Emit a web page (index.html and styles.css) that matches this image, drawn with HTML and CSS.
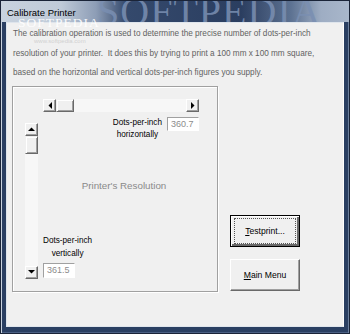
FILE: index.html
```html
<!DOCTYPE html>
<html lang="en">
<head>
    <meta charset="UTF-8">
    <title>Calibrate Printer</title>
    <link rel="stylesheet" href="styles.css">
</head>
<body>
    <div class="window">
        <div class="titlebar">
            <span class="title">Calibrate Printer</span>
            <span class="wm-big">SOFTPEDIA</span>
        </div>
        <div class="client">
            <span class="wm-small">SOFTPEDIA</span>
            <span class="wm-url">www.softpedia.com</span>
            <p class="intro">The calibration operation is used to determine the precise number of dots-per-inch<br>resolution of your printer.&nbsp; It does this by trying to print a 100 mm x 100 mm square,<br>based on the horizontal and vertical dots-per-inch figures you supply.</p>
            <div class="content">
                <div class="panel">
                    <div class="hscroll">
                        <div class="sb-btn"><svg width="4" height="7" viewBox="0 0 4 7"><path d="M4 0V7L0.5 3.5Z" fill="#000"/></svg></div>
                        <div class="sb-thumb"></div>
                        <div class="sb-track"></div>
                        <div class="sb-btn"><svg width="4" height="7" viewBox="0 0 4 7"><path d="M0 0V7L3.5 3.5Z" fill="#000"/></svg></div>
                    </div>
                    <div class="panel-body">
                        <div class="vscroll">
                            <div class="sb-btn"><svg width="7" height="4" viewBox="0 0 7 4"><path d="M0 4H7L3.5 0.5Z" fill="#000"/></svg></div>
                            <div class="sb-thumb"></div>
                            <div class="sb-track"></div>
                            <div class="sb-btn"><svg width="7" height="4" viewBox="0 0 7 4"><path d="M0 0H7L3.5 3.5Z" fill="#000"/></svg></div>
                        </div>
                        <div class="fields">
                            <div class="hrow">
                                <div class="lbl">Dots-per-inch<br>horizontally</div>
                                <div class="field">360.7</div>
                            </div>
                            <div class="caption">Printer's Resolution</div>
                            <div class="vrow">
                                <div class="lbl">Dots-per-inch<br>vertically</div>
                                <div class="field">361.5</div>
                            </div>
                        </div>
                    </div>
                </div>
                <div class="buttons">
                    <button class="btn default"><span class="focus"><u>T</u>estprint...</span></button>
                    <button class="btn"><u>M</u>ain Menu</button>
                </div>
            </div>
        </div>
    </div>
</body>
</html>
```

FILE: styles.css
```css
html, body { margin: 0; }
body { font-family: "Liberation Sans", Arial, sans-serif; font-size: 8.2px; }

.window {
    width: 350px; height: 334px; box-sizing: border-box;
    display: flex; flex-direction: column;
    background: #2a3f62;
    border: 1px solid #1a2438;
    box-shadow: inset 1px 0 #c9d3df, inset -1px 0 #6c7f9c, inset 0 -1px #4a5f82;
    overflow: hidden;
}

.titlebar {
    height: 21px; position: relative; overflow: hidden; flex: none;
    background: linear-gradient(90deg, #c8d2de 0, #bfcad8 60px, #8d9db6 95px, #34496c 125px, #2b3e60 240px, #5d7292 290px, #9eadc3 320px, #a9b7cb 349px);
}
.title {
    position: relative; z-index: 1;
    display: block; padding: 6px 0 0 6px;
    font-family: "Liberation Sans", Arial, sans-serif; font-size: 9.5px; color: #000;
}
.wm-big {
    position: absolute; left: 96px; top: -13px;
    font-family: "Liberation Serif", serif; font-size: 40px; letter-spacing: 1px;
    color: #7a8fb2; opacity: 0.85;
}

.client {
    flex: 1; position: relative;
    margin: 0 5px 6px;
    background: #f0f0f0;
    border: 1px solid #dfe5ec;
    border-right-color: #fff;
    padding: 0 0 0 5px;
}
.wm-small {
    position: absolute; left: 11px; top: -8px;
    font-family: "Liberation Serif", serif; font-size: 13.5px; letter-spacing: 1px;
    color: #fff; opacity: 0.9;
}
.wm-url {
    position: absolute; left: 27px; top: 15px;
    font-size: 6px; color: #d0d0d0;
}

.intro {
    margin: 1px 0 0 1px; white-space: nowrap;
    line-height: 19.5px; color: #626262; font-size: 8.2px;
}

.content { display: flex; margin-top: 3px; }

.panel {
    width: 206px; height: 206px; box-sizing: border-box;
    border: 1px solid #a0a0a0;
    box-shadow: inset 1px 1px #fff, 1px 1px #fff;
    padding: 12px 0 0 0;
}

.hscroll { display: flex; height: 13px; width: 156px; margin-left: 30px; }
.vscroll { display: flex; flex-direction: column; width: 13px; height: 156px; margin: 6px 0 0 12px; }

.sb-btn {
    width: 13px; height: 13px; box-sizing: border-box; flex: none;
    display: flex; align-items: center; justify-content: center;
    background: #f0f0f0;
    border: 1px solid; border-color: #fff #696969 #696969 #fff;
    box-shadow: inset -1px -1px #a0a0a0;
}
.hscroll .sb-thumb { width: 18px; height: 13px; }
.vscroll .sb-thumb { width: 13px; height: 18px; }
.sb-thumb {
    box-sizing: border-box; flex: none;
    background: #f0f0f0;
    border: 1px solid; border-color: #f0f0f0 #696969 #696969 #f0f0f0;
    box-shadow: inset 1px 1px #fff, inset -1px -1px #a0a0a0;
}
.sb-track { flex: 1; background: #f7f7f7; }

.panel-body { display: flex; margin-top: 5px; }

.fields { display: flex; flex-direction: column; width: 156px; margin-left: 5px; }

.lbl { text-align: center; line-height: 12px; color: #000; font-size: 8.2px; }
.field {
    width: 32px; height: 14px; box-sizing: border-box;
    background: #fff; color: #8c8c8c; font-size: 9px;
    border: 1px solid; border-color: #a0a0a0 #fff #fff #a0a0a0;
    padding: 0 0 0 3px; line-height: 12px;
}

.hrow { display: flex; justify-content: flex-end; gap: 5px; }

.caption { margin: 39px 0 0 6px; text-align: center; color: #8a8a8a; font-size: 9.8px; line-height: 12px; }

.vrow { display: flex; flex-direction: column; align-items: flex-start; margin-top: 42px; }
.vrow .lbl { line-height: 13px; }
.vrow .field { margin-top: 3px; height: 15px; line-height: 13px; }

.buttons { display: flex; flex-direction: column; gap: 12px; margin: 129px 0 0 12px; }
.btn {
    width: 70px; height: 32px; padding: 0;
    font-family: "Liberation Sans", Arial, sans-serif; font-size: 8.6px; color: #000;
    background: #f0f0f0;
    border: 1px solid; border-color: #fff #696969 #696969 #fff;
    box-shadow: inset -1px -1px #a0a0a0;
}
.btn.default { border-color: #000; box-shadow: inset 1px 1px #fff, inset -2px -2px #696969; }
.focus { display: inline-block; box-sizing: border-box; width: 62px; height: 26px; line-height: 24px; border: 1px dotted #555; }
```
